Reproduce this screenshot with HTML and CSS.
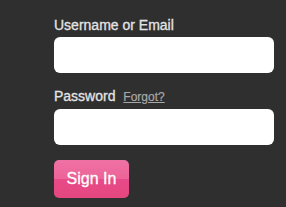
FILE: index.html
```html
<!DOCTYPE html>
<html lang="en">
<head>
    <meta charset="UTF-8">
    <meta name="viewport" content="width=device-width, initial-scale=1.0">
    <title>Sign In</title>
    <link rel="stylesheet" href="styles.css">
</head>
<body>
    <form class="login-form">
        <div class="field">
            <label for="login">Username or Email</label>
            <input type="text" id="login">
        </div>
        <div class="field">
            <label for="password">Password <a href="#" class="forgot">Forgot?</a></label>
            <input type="password" id="password">
        </div>
        <button type="submit" class="sign-in">Sign In</button>
    </form>
</body>
</html>
```

FILE: styles.css
```css
body {
    margin: 0;
    padding: 0;
    background-color: #2f2f2f;
    font-family: "Liberation Sans", Arial, sans-serif;
}
.login-form {
    width: 220px;
    padding: 17px 0 0 54px;
}
.field {
    margin-bottom: 15px;
}
label {
    display: block;
    color: #e4e4e4;
    font-size: 14px;
    line-height: 16px;
    margin-bottom: 4px;
    -webkit-text-stroke: 0.3px #e4e4e4;
}
.forgot {
    margin-left: 4px;
    color: #a8a8a8;
    font-size: 12px;
    -webkit-text-stroke: 0.2px #a8a8a8;
}
input[type="text"],
input[type="password"] {
    display: block;
    box-sizing: border-box;
    width: 100%;
    height: 36px;
    border: none;
    border-radius: 6px;
    background: #fff;
}
.sign-in {
    display: block;
    width: 75px;
    height: 38px;
    border: none;
    border-radius: 5px;
    background: linear-gradient(#ef72a4 0%, #ec6398 50%, #e74a88 50%, #e4477f 100%);
    color: #fff;
    font-family: "Liberation Sans", Arial, sans-serif;
    font-size: 16px;
    padding: 0;
    -webkit-text-stroke: 0.3px #fff;
}
```
